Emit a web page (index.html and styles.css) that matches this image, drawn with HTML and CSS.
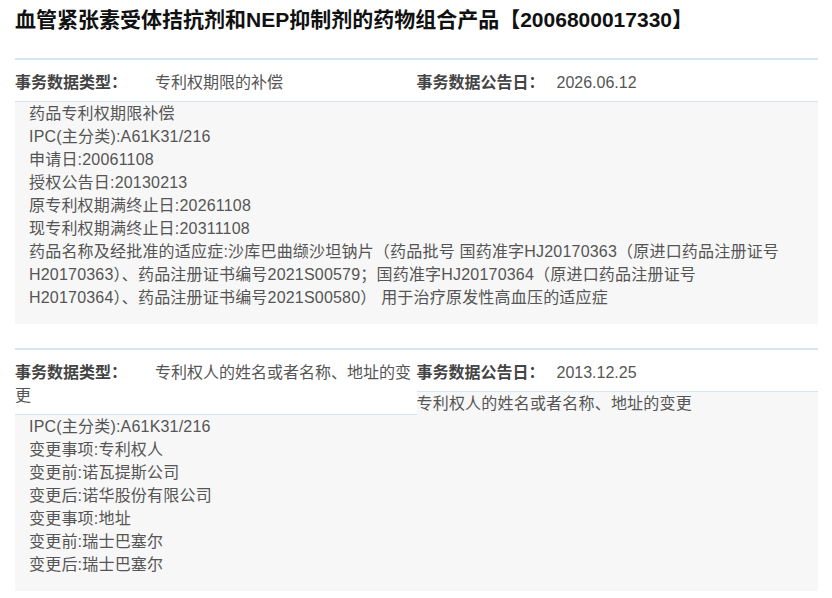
FILE: index.html
```html
<!DOCTYPE html>
<html>
<head>
    <meta charset="utf-8"/>
    <meta name="viewport" content="width=device-width, initial-scale=1.0" />
    <title>事务数据</title>
    <link rel="stylesheet" href="styles.css">
</head>
<body>
    <div class="wrap">
        <h1 class="title">血管紧张素受体拮抗剂和NEP抑制剂的药物组合产品【2006800017330】</h1>

        <div class="item">
            <div class="cell"><span class="lab">事务数据类型：</span>专利权期限的补偿</div>
            <div class="cell"><span class="lab">事务数据公告日：</span>2026.06.12</div>
            <div class="info">
                药品专利权期限补偿<br/>
                IPC(主分类):A61K31/216<br/>
                申请日:20061108<br/>
                授权公告日:20130213<br/>
                原专利权期满终止日:20261108<br/>
                现专利权期满终止日:20311108<br/>
                药品名称及经批准的适应症:沙库巴曲缬沙坦钠片（药品批号 国药准字HJ20170363（原进口药品注册证号H20170363）、药品注册证书编号2021S00579；国药准字HJ20170364（原进口药品注册证号H20170364）、药品注册证书编号2021S00580） 用于治疗原发性高血压的适应症
            </div>
        </div>

        <div class="item">
            <div class="cell"><span class="lab">事务数据类型：</span>专利权人的姓名或者名称、地址的变更</div>
            <div class="cell"><span class="lab">事务数据公告日：</span>2013.12.25</div>
            <div class="info">
                专利权人的姓名或者名称、地址的变更<br/>
                IPC(主分类):A61K31/216<br/>
                变更事项:专利权人<br/>
                变更前:诺瓦提斯公司<br/>
                变更后:诺华股份有限公司<br/>
                变更事项:地址<br/>
                变更前:瑞士巴塞尔<br/>
                变更后:瑞士巴塞尔
            </div>
        </div>
    </div>
</body>
</html>
```

FILE: styles.css
```css
html,body,div,h1,p{margin: 0px;padding: 0px;}
*{box-sizing: border-box;}
body{font-family: "Liberation Sans", Arial, "Noto Sans CJK SC", sans-serif;font-size: 16px;line-height: 23px;color: #555;background-color: #fff;}
.wrap {padding:0px 14px 0px 15px;}
.title {margin:6px 0px 24px 0px;font-size:21px;line-height:28px;font-weight:bold;color:#111;}
.item {border-top:2px solid #d5e5f1;margin-bottom:24px;}
.item:after {content:"";display:block;clear:both;}
.cell {float:left;width:50%;padding:11px 0px 7px 0px;background-color:#fff;border-bottom:1px solid #d5e5f1;position:relative;z-index:1;}
.lab {display:inline-block;width:140px;font-weight:bold;color:#444;}
.info {padding:0px 14px 15px 14px;background-color:#f7f7f7;letter-spacing:0.2px;}
```
